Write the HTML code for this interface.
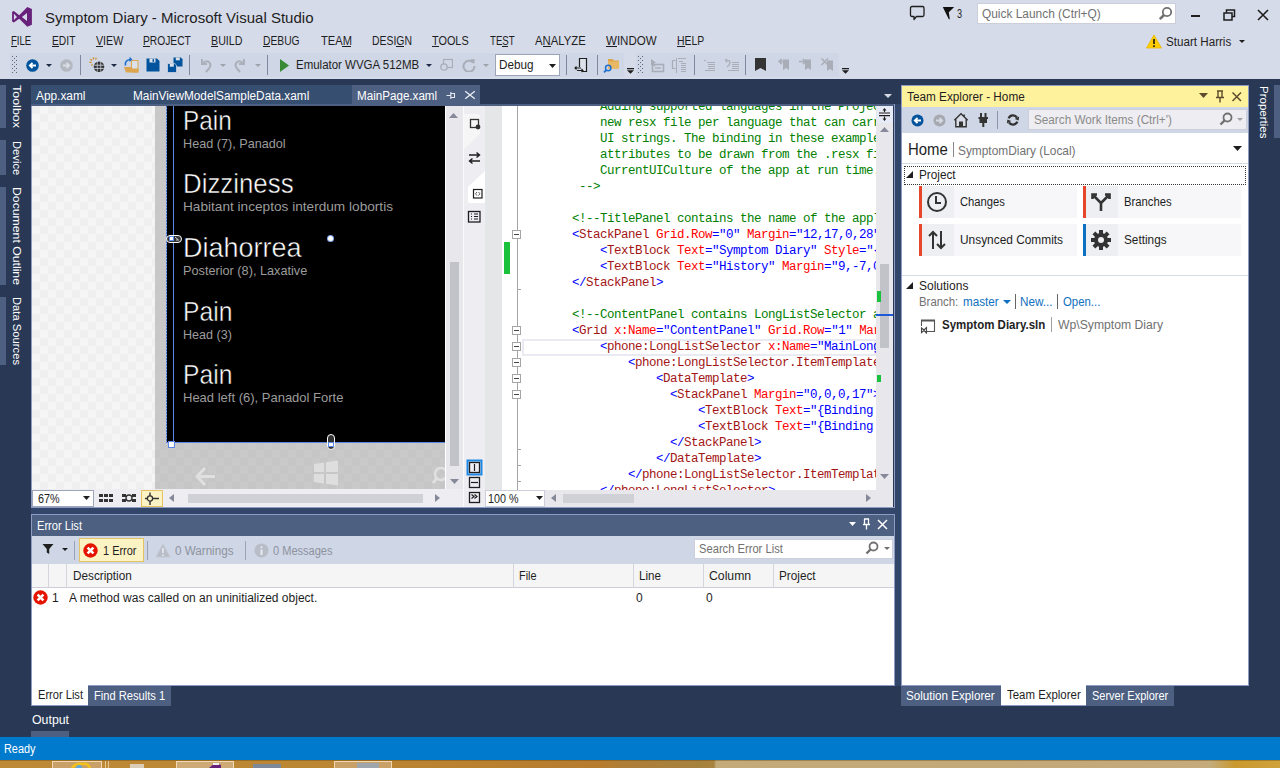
<!DOCTYPE html><html><head><meta charset="utf-8"><style>
html,body{margin:0;padding:0;}
body{width:1280px;height:768px;position:relative;overflow:hidden;background:#293955;font-family:"Liberation Sans", sans-serif;}
body div, body svg{position:absolute;}
.t{white-space:nowrap;}
</style></head><body>
<div style="left:0px;top:0px;width:1280px;height:79px;background:#D6DBE9;"></div>
<div style="left:10px;top:53px;width:614px;height:24px;background:#CFD6E5;"></div>
<div style="left:636px;top:53px;width:203px;height:24px;background:#CFD6E5;"></div>
<div style="left:0px;top:79px;width:1280px;height:658px;background:#293955;"></div>
<div style="left:0px;top:737px;width:1280px;height:23px;background:#007ACC;"></div>
<div style="left:0;top:760px;width:1280px;height:8px;background:linear-gradient(90deg,#BE8A38 0px,#BC8733 300px,#B77C2E 600px,#AE7E38 625px,#A6823F 700px,#A8843F 714px,#C3AA79 716px,#C2A978 1000px,#C3AB7C 1210px,#C9992F 1235px,#D0A23A 1280px);"></div>
<div style="left:0px;top:760px;width:1280px;height:1px;background:rgba(90,60,10,0.35);"></div>
<div style="left:52px;top:761px;width:50px;height:7px;background:#C9A168;box-sizing:border-box;border:1px solid rgba(255,240,210,0.7);border-bottom:none;"></div>
<div style="left:176px;top:761px;width:58px;height:7px;background:#CDAA76;box-sizing:border-box;border:1px solid rgba(255,240,210,0.7);border-bottom:none;"></div>
<div style="left:334px;top:761px;width:58px;height:7px;background:#C9A168;box-sizing:border-box;border:1px solid rgba(255,240,210,0.7);border-bottom:none;"></div>
<div style="left:105px;top:761px;width:1px;height:7px;background:rgba(255,240,210,0.6);"></div>
<div style="left:108px;top:761px;width:1px;height:7px;background:rgba(255,240,210,0.6);"></div>
<svg style="left:70px;top:762px;" width="22" height="6" viewBox="0 0 22 6"><path d="M2 6Q6 1 12 2Q18 1 20 6" stroke="#F3C11B" stroke-width="2.5" fill="none"/><circle cx="9" cy="6" r="3" fill="#5FA8D8"/></svg>
<svg style="left:205px;top:762px;" width="18" height="6" viewBox="0 0 18 6"><path d="M4 6L10 1L16 3V6Z" fill="#68217A"/><rect x="8" y="1" width="6" height="2" fill="#F0F0F0"/></svg>
<div style="left:130px;top:764px;width:14px;height:4px;background:#D9CDB8;"></div>
<div style="left:253px;top:764px;width:28px;height:4px;background:#7D8898;"></div>
<div style="left:357px;top:763px;width:22px;height:5px;background:#9EA5AC;"></div>
<svg style="left:0px;top:0px;" width="40" height="32" viewBox="0 0 40 32"><path d="M13.8 11.1L19.2 15.2L27.3 7L31.9 9.1V24.7L27.3 26.7L19.2 18.8L13.8 22.6L12.1 21.6V11.8Z M21.9 17L27 13V21.1Z M13.9 13.8L17 17L13.9 19.9Z" fill="#68217A" fill-rule="evenodd"/></svg>
<div class="t" style="left:44.5px;top:10.30px;font-size:15px;line-height:15px;color:#1E1E1E;transform-origin:0 0;transform:scaleX(1.0014);">Symptom Diary - Microsoft Visual Studio</div>
<svg style="left:909px;top:5px;" width="17" height="16" viewBox="0 0 17 16"><path d="M3 1.5H13.5Q15 1.5 15 3V10Q15 11.5 13.5 11.5H7.5L5 14.5V11.5H3Q1.5 11.5 1.5 10V3Q1.5 1.5 3 1.5Z" stroke="#1E1E1E" stroke-width="1.3" fill="none" stroke-linejoin="round"/></svg>
<svg style="left:942px;top:6px;" width="13" height="14" viewBox="0 0 13 14"><path d="M0.8 1H12.2L6.8 6.2L7.8 13.2H6.8Z" fill="#111"/></svg>
<div class="t" style="left:957.4px;top:7.84px;font-size:12px;line-height:12px;color:#1E1E1E;transform-origin:0 0;transform:scaleX(0.7626);">3</div>
<div style="left:977px;top:3px;width:199px;height:21px;background:#FFFFFF;box-sizing:border-box;border:1px solid #CCCEDB;"></div>
<div class="t" style="left:981.7px;top:7.84px;font-size:12px;line-height:12px;color:#717171;transform-origin:0 0;transform:scaleX(0.9917);">Quick Launch (Ctrl+Q)</div>
<svg style="left:1158px;top:6px;" width="15" height="15" viewBox="0 0 15 15"><circle cx="9" cy="6" r="4.2" stroke="#717171" stroke-width="1.8" fill="none"/><path d="M6 9L1.8 13.2" stroke="#717171" stroke-width="2.6"/></svg>
<div style="left:1191px;top:15px;width:9px;height:2px;background:#1E1E1E;"></div>
<svg style="left:1223px;top:9px;" width="13" height="12" viewBox="0 0 13 12"><path d="M3.5 3.5V1H11.5V7.5H9M1 4H9V11H1Z" stroke="#1E1E1E" stroke-width="1.5" fill="none"/></svg>
<svg style="left:1257px;top:9px;" width="12" height="12" viewBox="0 0 12 12"><path d="M1 1L11 11M11 1L1 11" stroke="#1E1E1E" stroke-width="1.6"/></svg>
<div class="t" style="left:11.25px;top:34.84px;font-size:12px;line-height:12px;color:#1E1E1E;transform-origin:0 0;transform:scaleX(0.8000);">FILE</div>
<div style="left:11px;top:46px;width:6px;height:1px;background:#1E1E1E;"></div>
<div class="t" style="left:52.0px;top:34.84px;font-size:12px;line-height:12px;color:#1E1E1E;transform-origin:0 0;transform:scaleX(0.8568);">EDIT</div>
<div style="left:52px;top:46px;width:7px;height:1px;background:#1E1E1E;"></div>
<div class="t" style="left:95.6px;top:34.84px;font-size:12px;line-height:12px;color:#1E1E1E;transform-origin:0 0;transform:scaleX(0.8896);">VIEW</div>
<div style="left:96px;top:46px;width:7px;height:1px;background:#1E1E1E;"></div>
<div class="t" style="left:142.9px;top:34.84px;font-size:12px;line-height:12px;color:#1E1E1E;transform-origin:0 0;transform:scaleX(0.8536);">PROJECT</div>
<div style="left:143px;top:46px;width:7px;height:1px;background:#1E1E1E;"></div>
<div class="t" style="left:210.9px;top:34.84px;font-size:12px;line-height:12px;color:#1E1E1E;transform-origin:0 0;transform:scaleX(0.8905);">BUILD</div>
<div style="left:211px;top:46px;width:7px;height:1px;background:#1E1E1E;"></div>
<div class="t" style="left:262.9px;top:34.84px;font-size:12px;line-height:12px;color:#1E1E1E;transform-origin:0 0;transform:scaleX(0.8574);">DEBUG</div>
<div style="left:263px;top:46px;width:7px;height:1px;background:#1E1E1E;"></div>
<div class="t" style="left:320.6px;top:34.84px;font-size:12px;line-height:12px;color:#1E1E1E;transform-origin:0 0;transform:scaleX(0.9276);">TEAM</div>
<div style="left:342px;top:46px;width:9px;height:1px;background:#1E1E1E;"></div>
<div class="t" style="left:371.9px;top:34.84px;font-size:12px;line-height:12px;color:#1E1E1E;transform-origin:0 0;transform:scaleX(0.8696);">DESIGN</div>
<div style="left:396px;top:46px;width:8px;height:1px;background:#1E1E1E;"></div>
<div class="t" style="left:432.1px;top:34.84px;font-size:12px;line-height:12px;color:#1E1E1E;transform-origin:0 0;transform:scaleX(0.9051);">TOOLS</div>
<div style="left:432px;top:46px;width:7px;height:1px;background:#1E1E1E;"></div>
<div class="t" style="left:489.8px;top:34.84px;font-size:12px;line-height:12px;color:#1E1E1E;transform-origin:0 0;transform:scaleX(0.8049);">TEST</div>
<div style="left:502px;top:46px;width:6px;height:1px;background:#1E1E1E;"></div>
<div class="t" style="left:535.0px;top:34.84px;font-size:12px;line-height:12px;color:#1E1E1E;transform-origin:0 0;transform:scaleX(0.9422);">ANALYZE</div>
<div style="left:543px;top:46px;width:8px;height:1px;background:#1E1E1E;"></div>
<div class="t" style="left:605.9px;top:34.84px;font-size:12px;line-height:12px;color:#1E1E1E;transform-origin:0 0;transform:scaleX(0.9615);">WINDOW</div>
<div style="left:606px;top:46px;width:11px;height:1px;background:#1E1E1E;"></div>
<div class="t" style="left:677.0px;top:34.84px;font-size:12px;line-height:12px;color:#1E1E1E;transform-origin:0 0;transform:scaleX(0.8701);">HELP</div>
<div style="left:677px;top:46px;width:8px;height:1px;background:#1E1E1E;"></div>
<svg style="left:1146px;top:34px;" width="16" height="15" viewBox="0 0 16 15"><path d="M8 1L15.5 14H0.5Z" fill="#FFCC00" stroke="#E8B800" stroke-width="0.8" stroke-linejoin="round"/><path d="M8 5V10M8 11.2V13" stroke="#1E1E1E" stroke-width="1.7"/></svg>
<div class="t" style="left:1165.7px;top:35.84px;font-size:12px;line-height:12px;color:#1E1E1E;transform-origin:0 0;transform:scaleX(0.9692);">Stuart Harris</div>
<svg style="left:1239px;top:40px;" width="7" height="4" viewBox="0 0 7 4"><path d="M0 0H6L3 3Z" fill="#1E1E1E"/></svg>
<svg style="left:12px;top:56px;" width="5" height="17" viewBox="0 0 5 17"><g fill="#5F6675"><rect x="0" y="0" width="1" height="1"/><rect x="4" y="0" width="1" height="1"/><rect x="0" y="4" width="1" height="1"/><rect x="4" y="4" width="1" height="1"/><rect x="0" y="8" width="1" height="1"/><rect x="4" y="8" width="1" height="1"/><rect x="0" y="12" width="1" height="1"/><rect x="4" y="12" width="1" height="1"/><rect x="0" y="16" width="1" height="1"/><rect x="4" y="16" width="1" height="1"/><rect x="2" y="2" width="1" height="1"/><rect x="2" y="6" width="1" height="1"/><rect x="2" y="10" width="1" height="1"/><rect x="2" y="14" width="1" height="1"/></g></svg>
<svg style="left:638px;top:56px;" width="5" height="17" viewBox="0 0 5 17"><g fill="#5F6675"><rect x="0" y="0" width="1" height="1"/><rect x="4" y="0" width="1" height="1"/><rect x="0" y="4" width="1" height="1"/><rect x="4" y="4" width="1" height="1"/><rect x="0" y="8" width="1" height="1"/><rect x="4" y="8" width="1" height="1"/><rect x="0" y="12" width="1" height="1"/><rect x="4" y="12" width="1" height="1"/><rect x="0" y="16" width="1" height="1"/><rect x="4" y="16" width="1" height="1"/><rect x="2" y="2" width="1" height="1"/><rect x="2" y="6" width="1" height="1"/><rect x="2" y="10" width="1" height="1"/><rect x="2" y="14" width="1" height="1"/></g></svg>
<svg style="left:26px;top:59px;" width="13" height="13" viewBox="0 0 13 13"><circle cx="6.5" cy="6.5" r="6.3" fill="#00539C"/><path d="M10 6.5H4M6.5 3.8L3.8 6.5L6.5 9.2" stroke="#FFFFFF" stroke-width="1.8" fill="none"/></svg>
<svg style="left:46px;top:64px;" width="7" height="4" viewBox="0 0 7 4"><path d="M0 0H6L3 3Z" fill="#1E2A45"/></svg>
<svg style="left:60px;top:59px;" width="13" height="13" viewBox="0 0 13 13"><circle cx="6.5" cy="6.5" r="6.3" fill="#B4B8C1"/><path d="M3 6.5H9M6.5 3.8L9.2 6.5L6.5 9.2" stroke="#D9DDE6" stroke-width="1.8" fill="none"/></svg>
<div style="left:80px;top:55px;width:1px;height:20px;background:#7F889C;"></div>
<svg style="left:88px;top:56px;" width="18" height="18" viewBox="0 0 18 18"><circle cx="11" cy="10.8" r="5.3" fill="#333"/><path d="M6.2 9.2H15.8M6.2 12.4H15.8" stroke="#CFD6E5" stroke-width="0.9"/><path d="M9.3 5.8V15.8M12.7 5.8V15.8" stroke="#CFD6E5" stroke-width="0.7"/><path d="M1.5 6.3H3.6M2.4 3.3L4 4.5M5.3 1.4L5.6 3.3M8.3 1.8L7.6 3.6M3.2 9.6L4.6 8.6" stroke="#D08A1E" stroke-width="1.2"/></svg>
<svg style="left:111px;top:64px;" width="7" height="4" viewBox="0 0 7 4"><path d="M0 0H6L3 3Z" fill="#1E2A45"/></svg>
<svg style="left:123px;top:56px;" width="16" height="18" viewBox="0 0 16 18"><path d="M8.5 4.5H15V16H8.5Z" fill="#DDE1EA" stroke="#DCA54E" stroke-width="1"/><path d="M1 11H8L9.5 12.5H15.5V16.5H3Z" fill="#DCA54E"/><path d="M2.5 9.5Q1.5 4 7.5 3.5" stroke="#1E6FD0" stroke-width="1.6" fill="none"/><path d="M6.5 0.8L9.5 3.5L6.5 6Z" fill="#1E6FD0"/></svg>
<svg style="left:146px;top:58px;" width="14" height="14" viewBox="0 0 14 14"><path d="M0.5 0.5H11L13.5 3V13.5H0.5Z" fill="#00539C"/><rect x="3.5" y="0.5" width="6" height="4" fill="#DDE1EA"/><rect x="6.5" y="1.2" width="1.6" height="2.6" fill="#00539C"/></svg>
<svg style="left:167px;top:57px;" width="16" height="16" viewBox="0 0 16 16"><path d="M6.5 0.5H13.8L15.5 2.2V9.5H6.5Z" fill="#00539C"/><rect x="8.8" y="0.5" width="4" height="2.8" fill="#DDE1EA"/><path d="M0.5 6.5H7.8L9.5 8.2V15.5H0.5Z" fill="#00539C" stroke="#CFD6E5" stroke-width="0.8"/><rect x="2.8" y="6.9" width="4" height="2.8" fill="#DDE1EA"/></svg>
<div style="left:189px;top:55px;width:1px;height:20px;background:#7F889C;"></div>
<svg style="left:198px;top:57px;" width="15" height="16" viewBox="0 0 15 16"><path d="M4 2V7H9M4.5 6.5Q8 3 11 5Q14 8 11 11.5L8 15" stroke="#ABB0BA" stroke-width="2" fill="none"/></svg>
<svg style="left:220px;top:64px;" width="7" height="4" viewBox="0 0 7 4"><path d="M0 0H6L3 3Z" fill="#9EA3AD"/></svg>
<svg style="left:233px;top:57px;" width="15" height="16" viewBox="0 0 15 16"><path d="M11 2V7H6M10.5 6.5Q7 3 4 5Q1 8 4 11.5L7 15" stroke="#ABB0BA" stroke-width="2" fill="none"/></svg>
<svg style="left:255px;top:64px;" width="7" height="4" viewBox="0 0 7 4"><path d="M0 0H6L3 3Z" fill="#9EA3AD"/></svg>
<div style="left:267px;top:55px;width:1px;height:20px;background:#7F889C;"></div>
<svg style="left:280px;top:59px;" width="9" height="13" viewBox="0 0 9 13"><path d="M0 0L9 6.5L0 13Z" fill="#388A34"/></svg>
<div class="t" style="left:296.2px;top:58.84px;font-size:12px;line-height:12px;color:#1E1E1E;transform-origin:0 0;transform:scaleX(0.9566);">Emulator WVGA 512MB</div>
<svg style="left:426px;top:64px;" width="7" height="4" viewBox="0 0 7 4"><path d="M0 0H6L3 3Z" fill="#1E2A45"/></svg>
<svg style="left:440px;top:58px;" width="13" height="13" viewBox="0 0 13 13"><rect x="3.5" y="1.5" width="9" height="8" stroke="#A8ADB7" stroke-width="1.2" fill="none"/><circle cx="4" cy="9" r="3.2" stroke="#A8ADB7" stroke-width="1.3" fill="#CFD6E5"/></svg>
<svg style="left:462px;top:58px;" width="14" height="14" viewBox="0 0 14 14"><path d="M11 4.5A5.5 5.5 0 1 0 12.5 8" stroke="#A8ADB7" stroke-width="2" fill="none"/><path d="M8.5 1L13 1.5L12 6Z" fill="#A8ADB7"/></svg>
<svg style="left:483px;top:64px;" width="7" height="4" viewBox="0 0 7 4"><path d="M0 0H6L3 3Z" fill="#9EA3AD"/></svg>
<div style="left:495px;top:54px;width:65px;height:22px;background:#FFFFFF;box-sizing:border-box;border:1px solid #9DA5B8;"></div>
<div class="t" style="left:499.2px;top:58.84px;font-size:12px;line-height:12px;color:#1E1E1E;transform-origin:0 0;transform:scaleX(0.9753);">Debug</div>
<svg style="left:549px;top:64px;" width="8" height="5" viewBox="0 0 8 5"><path d="M0 0H7L3.5 4Z" fill="#1E1E1E"/></svg>
<div style="left:566px;top:55px;width:1px;height:20px;background:#7F889C;"></div>
<svg style="left:573px;top:57px;" width="16" height="16" viewBox="0 0 16 16"><path d="M6.5 10V1.5H13.5V14.5H9" stroke="#1E1E1E" stroke-width="1.2" fill="#DDE1EA"/><path d="M2 11H8M3.5 9.5L2 11L3.5 12.5M4 13.5H10M8.5 12L10 13.5L8.5 15" stroke="#1E1E1E" stroke-width="1.1" fill="none"/></svg>
<div style="left:597px;top:55px;width:1px;height:20px;background:#7F889C;"></div>
<svg style="left:603px;top:57px;" width="17" height="17" viewBox="0 0 17 17"><path d="M5 2H9.5L11 3.5H16V11.5H5Z" fill="#DCA54E"/><path d="M5 4.5H16V11.5H5Z" fill="#E8B865"/><circle cx="5.2" cy="11" r="2.7" stroke="#1E6FD0" stroke-width="1.5" fill="none"/><path d="M3.3 13L1 15.3" stroke="#1E6FD0" stroke-width="1.8"/></svg>
<div style="left:624px;top:53px;width:12px;height:24px;background:#D6DBE9;"></div>
<svg style="left:627px;top:68px;" width="7" height="6" viewBox="0 0 7 6"><rect x="0" y="0" width="7" height="1.3" fill="#1E1E1E"/><path d="M0 2.3H7L3.5 5.8Z" fill="#1E1E1E"/></svg>
<svg style="left:650px;top:58px;" width="16" height="15" viewBox="0 0 16 15"><path d="M1 1L6 4.5L3.8 5.2L5.3 8L4 8.6L2.6 5.9L1 7.4Z" fill="#A8ADB7"/><rect x="2.5" y="6.5" width="11" height="7" stroke="#A8ADB7" stroke-width="1.6" fill="none"/><rect x="5" y="9.3" width="6" height="1.4" fill="#A8ADB7"/></svg>
<svg style="left:671px;top:57px;" width="16" height="16" viewBox="0 0 16 16"><path d="M4.5 3.5H1.5V11.5H4.5" stroke="#A8ADB7" stroke-width="1.2" fill="none"/><rect x="5" y="1" width="1" height="15" fill="#A8ADB7"/><rect x="7" y="1" width="8" height="1" fill="#A8ADB7"/><rect x="8" y="4" width="4" height="1" fill="#A8ADB7"/><rect x="10" y="6" width="5" height="1" fill="#A8ADB7"/><rect x="10" y="8" width="5" height="1" fill="#A8ADB7"/><rect x="10" y="10" width="5" height="1" fill="#A8ADB7"/><rect x="10" y="12" width="5" height="1" fill="#A8ADB7"/><rect x="10" y="14" width="5" height="1" fill="#A8ADB7"/></svg>
<div style="left:694px;top:55px;width:1px;height:20px;background:#7F889C;"></div>
<svg style="left:703px;top:58px;" width="14" height="14" viewBox="0 0 14 14"><rect x="1" y="2" width="2" height="1" fill="#A8ADB7"/><rect x="4" y="4" width="8" height="1" fill="#A8ADB7"/><rect x="5" y="6" width="7" height="1" fill="#A8ADB7"/><rect x="5" y="8" width="7" height="1" fill="#A8ADB7"/><rect x="5" y="10" width="7" height="1" fill="#A8ADB7"/><rect x="2" y="12" width="10" height="1" fill="#A8ADB7"/></svg>
<svg style="left:724px;top:58px;" width="16" height="15" viewBox="0 0 16 15"><path d="M2 4Q6 1 6 4.5Q6 7 3 9" stroke="#A8ADB7" stroke-width="1.4" fill="none"/><path d="M0.5 1.5L3.5 1L2.5 4.5Z" fill="#A8ADB7"/><rect x="8" y="4" width="7" height="1" fill="#A8ADB7"/><rect x="8" y="6" width="7" height="1" fill="#A8ADB7"/><rect x="8" y="8" width="7" height="1" fill="#A8ADB7"/><rect x="8" y="10" width="7" height="1" fill="#A8ADB7"/><rect x="4" y="12" width="11" height="1" fill="#A8ADB7"/></svg>
<div style="left:745px;top:55px;width:1px;height:20px;background:#7F889C;"></div>
<svg style="left:755px;top:58px;" width="11" height="13" viewBox="0 0 11 13"><path d="M0 0H11V13L5.5 10L0 13Z" fill="#333"/></svg>
<svg style="left:777px;top:57px;" width="13" height="15" viewBox="0 0 13 15"><path d="M6 2.5H12V13L9 11L6 13Z" fill="#A8ADB7"/><path d="M8 4.5H2.5M4.8 2L2.2 4.5L4.8 7" stroke="#A8ADB7" stroke-width="1.6" fill="none"/></svg>
<svg style="left:798px;top:57px;" width="13" height="15" viewBox="0 0 13 15"><path d="M7 2.5H13V13L10 11L7 13Z" fill="#A8ADB7"/><path d="M1 4.5H7M5 2L7.6 4.5L5 7" stroke="#A8ADB7" stroke-width="1.6" fill="none"/></svg>
<svg style="left:820px;top:57px;" width="13" height="15" viewBox="0 0 13 15"><path d="M7 3.5H13V14L10 12L7 14Z" fill="#A8ADB7"/><path d="M1.5 1.5L8 8M8 1.5L1.5 8" stroke="#A8ADB7" stroke-width="1.5" fill="none"/></svg>
<div style="left:839px;top:53px;width:12px;height:24px;background:#D6DBE9;"></div>
<svg style="left:842px;top:68px;" width="7" height="6" viewBox="0 0 7 6"><rect x="0" y="0" width="7" height="1.3" fill="#1E1E1E"/><path d="M0 2.3H7L3.5 5.8Z" fill="#1E1E1E"/></svg>
<div style="left:0px;top:85px;width:6px;height:43px;background:#4D6082;"></div>
<div class="t" style="left:22px;top:85.00px;font-size:11.5px;line-height:11.5px;color:#FFFFFF;transform-origin:0 0;transform:rotate(90deg) scaleX(1.0852);">Toolbox</div>
<div style="left:0px;top:140px;width:6px;height:35px;background:#4D6082;"></div>
<div class="t" style="left:22px;top:140.80px;font-size:11.5px;line-height:11.5px;color:#FFFFFF;transform-origin:0 0;transform:rotate(90deg) scaleX(0.9737);">Device</div>
<div style="left:0px;top:187px;width:6px;height:98px;background:#4D6082;"></div>
<div class="t" style="left:22px;top:187.00px;font-size:11.5px;line-height:11.5px;color:#FFFFFF;transform-origin:0 0;transform:rotate(90deg) scaleX(1.0645);">Document Outline</div>
<div style="left:0px;top:297px;width:6px;height:68px;background:#4D6082;"></div>
<div class="t" style="left:22px;top:297.00px;font-size:11.5px;line-height:11.5px;color:#FFFFFF;transform-origin:0 0;transform:rotate(90deg) scaleX(0.9758);">Data Sources</div>
<div style="left:1274px;top:85px;width:6px;height:53px;background:#4D6082;"></div>
<div class="t" style="left:1268.5px;top:85.50px;font-size:11.5px;line-height:11.5px;color:#FFFFFF;transform-origin:0 0;transform:rotate(90deg) scaleX(1.0012);">Properties</div>
<div style="left:31px;top:85px;width:321px;height:19px;background:#364E6F;"></div>
<div style="left:352px;top:85px;width:128px;height:19px;background:#4D6082;"></div>
<div style="left:31px;top:104px;width:864px;height:2px;background:#4D6082;"></div>
<div class="t" style="left:35.6px;top:89.84px;font-size:12px;line-height:12px;color:#FFFFFF;transform-origin:0 0;transform:scaleX(0.9880);">App.xaml</div>
<div class="t" style="left:132.5px;top:89.84px;font-size:12px;line-height:12px;color:#FFFFFF;transform-origin:0 0;transform:scaleX(0.9836);">MainViewModelSampleData.xaml</div>
<div class="t" style="left:356.6px;top:89.84px;font-size:12px;line-height:12px;color:#FFFFFF;transform-origin:0 0;transform:scaleX(0.9687);">MainPage.xaml</div>
<svg style="left:446px;top:90px;" width="10" height="10" viewBox="0 0 10 10"><path d="M0.5 5.5H4.5M4.8 2V9M4.8 3.5H8.5V7.5H4.8" stroke="#E6E9F0" stroke-width="1.1" fill="none"/></svg>
<svg style="left:464px;top:90px;" width="12" height="10" viewBox="0 0 12 10"><path d="M1.2 1.2L10.8 8.8M10.8 1.2L1.2 8.8" stroke="#E6E9F0" stroke-width="1.4"/></svg>
<svg style="left:884px;top:94px;" width="9" height="5" viewBox="0 0 9 5"><path d="M0 0H8L4 4Z" fill="#D5DAE5"/></svg>
<div style="left:32px;top:106px;width:123px;height:384px;background:repeating-conic-gradient(#F5F5F5 0 25%,#EFEFEF 0 50%) 0 0/16px 16px;"></div>
<div style="left:155px;top:106px;width:290px;height:383px;background:repeating-conic-gradient(#C9C9C9 0 25%,#C6C6C6 0 50%) 5px 0/16px 16px;"></div>
<div style="left:155px;top:106px;width:11px;height:336px;background:#C8C8C8;"></div>
<div style="left:166px;top:106px;width:279px;height:336px;background:#000000;"></div>
<div style="left:166px;top:106px;width:1px;height:336px;background:repeating-linear-gradient(180deg,#4F7FE0 0 2px,#9DB4E8 2px 3px);"></div>
<div style="left:173px;top:106px;width:1px;height:336px;background:#5A86E6;"></div>
<div style="left:166px;top:442px;width:279px;height:1px;background:#5A86E6;"></div>
<div style="left:169px;top:442px;width:5px;height:5px;background:#FFFFFF;box-shadow:0 0 0 1px #5A86E6;"></div>
<div style="left:166px;top:235px;width:14px;height:6px;border:1px solid #FFFFFF;border-radius:4px;background:#333;"></div>
<div style="left:169px;top:236px;width:5px;height:5px;background:#FFFFFF;box-sizing:border-box;border:1px solid #5A8BE8;"></div>
<svg style="left:174px;top:236px;" width="6" height="5" viewBox="0 0 6 5"><path d="M1 1L4 3.5M2 4H5" stroke="#DDD" stroke-width="0.9"/></svg>
<div style="left:327px;top:434px;width:6px;height:14px;border:1px solid #FFFFFF;border-radius:4px;background:#333;"></div>
<div style="left:328px;top:442px;width:6px;height:5px;background:#FFFFFF;box-sizing:border-box;border:1px solid #5A8BE8;"></div>
<div style="left:328px;top:236px;width:5px;height:5px;border-radius:50%;background:#FFFFFF;box-shadow:0 0 0 1px #7FA6F0;"></div>
<div class="t" style="left:183.3px;top:106.70px;font-size:28px;line-height:28px;color:#FFFFFF;transform-origin:0 0;transform:scaleX(0.8687);-webkit-text-stroke:0.5px #000;">Pain</div>
<div class="t" style="left:182.6px;top:136.77px;font-size:13.5px;line-height:13.5px;color:#9C9C9C;transform-origin:0 0;transform:scaleX(0.9365);">Head (7), Panadol</div>
<div class="t" style="left:183.3px;top:170.10px;font-size:28px;line-height:28px;color:#FFFFFF;transform-origin:0 0;transform:scaleX(0.9231);-webkit-text-stroke:0.5px #000;">Dizziness</div>
<div class="t" style="left:182.6px;top:200.17px;font-size:13.5px;line-height:13.5px;color:#9C9C9C;transform-origin:0 0;transform:scaleX(1.0102);">Habitant inceptos interdum lobortis</div>
<div class="t" style="left:183.3px;top:233.80px;font-size:28px;line-height:28px;color:#FFFFFF;transform-origin:0 0;transform:scaleX(0.9634);-webkit-text-stroke:0.5px #000;">Diahorrea</div>
<div class="t" style="left:182.6px;top:263.92px;font-size:13.5px;line-height:13.5px;color:#9C9C9C;transform-origin:0 0;transform:scaleX(0.9412);">Posterior (8), Laxative</div>
<div class="t" style="left:183.3px;top:297.90px;font-size:28px;line-height:28px;color:#FFFFFF;transform-origin:0 0;transform:scaleX(0.8812);-webkit-text-stroke:0.5px #000;">Pain</div>
<div class="t" style="left:182.6px;top:327.67px;font-size:13.5px;line-height:13.5px;color:#9C9C9C;transform-origin:0 0;transform:scaleX(0.9295);">Head (3)</div>
<div class="t" style="left:183.3px;top:360.70px;font-size:28px;line-height:28px;color:#FFFFFF;transform-origin:0 0;transform:scaleX(0.8812);-webkit-text-stroke:0.5px #000;">Pain</div>
<div class="t" style="left:182.6px;top:390.67px;font-size:13.5px;line-height:13.5px;color:#9C9C9C;transform-origin:0 0;transform:scaleX(0.9630);">Head left (6), Panadol Forte</div>
<svg style="left:195px;top:467px;" width="21" height="19" viewBox="0 0 21 19"><path d="M10 1L2 9.5L10 18M2 9.5H20" stroke="#E0E0E0" stroke-width="3" fill="none"/></svg>
<svg style="left:313px;top:460px;" width="26" height="26" viewBox="0 0 26 26"><path d="M1 4L11 2.5V12H1ZM13 2.2L25 0.5V12H13ZM1 14H11V23.5L1 22ZM13 14H25V25.5L13 23.8Z" fill="#DEDEDE"/></svg>
<svg style="left:432px;top:466px;" width="13" height="20" viewBox="0 0 13 20"><circle cx="9" cy="8" r="6" stroke="#E0E0E0" stroke-width="2.5" fill="none"/><path d="M5 12L1 17" stroke="#E0E0E0" stroke-width="3"/></svg>
<div style="left:445px;top:106px;width:1px;height:383px;background:#FFFFFF;"></div>
<div style="left:446px;top:106px;width:17px;height:383px;background:#E8E8EC;"></div>
<svg style="left:449px;top:113px;" width="10" height="6" viewBox="0 0 10 6"><path d="M0 5H9L4.5 0Z" fill="#868999"/></svg>
<div style="left:450px;top:262px;width:9px;height:204px;background:#C2C3C9;"></div>
<svg style="left:450px;top:479px;" width="10" height="6" viewBox="0 0 10 6"><path d="M0 0H9L4.5 5Z" fill="#868999"/></svg>
<div style="left:463px;top:106px;width:1px;height:401px;background:#FAFAFA;"></div>
<div style="left:464px;top:106px;width:21px;height:401px;background:#EEEEF2;"></div>
<div style="left:485px;top:106px;width:17px;height:384px;background:#E5E6E8;"></div>
<svg style="left:463px;top:106px;" width="22" height="100" viewBox="0 0 22 100"><path d="M1 8H15Q17 8 17 10V28L1 43Z" fill="#F6F6F7"/><path d="M22 65V97H7Q5 97 5 95V81Z" fill="#FFFFFF"/></svg>
<svg style="left:466px;top:115px;" width="18" height="16" viewBox="0 0 18 16"><rect x="4.5" y="4.5" width="8" height="8" stroke="#333" stroke-width="1.3" fill="none"/><circle cx="12" cy="12" r="2.4" fill="#333"/></svg>
<svg style="left:466px;top:149px;" width="18" height="18" viewBox="0 0 18 18"><path d="M3 6H13.5M10.5 3.5L13.5 6L10.5 8.5M14 12H3.5M6.5 9.5L3.5 12L6.5 14.5" stroke="#1E1E1E" stroke-width="1.4" fill="none"/></svg>
<svg style="left:470px;top:187px;" width="14" height="13" viewBox="0 0 14 13"><rect x="3.5" y="2.5" width="8.5" height="8.5" stroke="#1E1E1E" stroke-width="1.2" fill="none"/><path d="M7 5L5.6 6.8L7 8.6M8.5 5L9.9 6.8L8.5 8.6" stroke="#333" stroke-width="0.8" fill="none"/></svg>
<svg style="left:466px;top:209px;" width="16" height="15" viewBox="0 0 16 15"><rect x="2.5" y="2.5" width="11.5" height="10.5" stroke="#1E1E1E" stroke-width="1.3" fill="none"/><path d="M5 5H6M8 5H12M5 7.5H6M8 7.5H12M5 10H6M8 10H12" stroke="#1E1E1E" stroke-width="1"/></svg>
<svg style="left:466px;top:459px;" width="18" height="48" viewBox="0 0 18 48"><rect x="1.5" y="1.5" width="14" height="14" stroke="#1E88E5" stroke-width="2" fill="none"/><rect x="3.5" y="3.5" width="10" height="10" stroke="#1E1E1E" stroke-width="1.3" fill="none"/><path d="M8.5 5V12" stroke="#1E1E1E" stroke-width="1.2"/><rect x="3.5" y="18.5" width="10" height="10" stroke="#1E1E1E" stroke-width="1.3" fill="none"/><path d="M5 23.5H12" stroke="#1E1E1E" stroke-width="1.2"/><rect x="3.5" y="33.5" width="10" height="10" stroke="#1E1E1E" stroke-width="1.3" fill="none"/><path d="M5.5 35.5L8 37.5L5.5 39.5M8.5 35.5L11 37.5L8.5 39.5" stroke="#1E1E1E" stroke-width="1.2" fill="none"/></svg>
<div style="left:32px;top:489px;width:431px;height:18px;background:#EEEEF2;"></div>
<div style="left:32px;top:490px;width:62px;height:17px;background:#FFFFFF;box-sizing:border-box;border:1px solid #9DA5B8;"></div>
<div class="t" style="left:38.25px;top:492.84px;font-size:12px;line-height:12px;color:#1E1E1E;transform-origin:0 0;transform:scaleX(0.9000);">67%</div>
<svg style="left:83px;top:496px;" width="8" height="5" viewBox="0 0 8 5"><path d="M0 0H7L3.5 4Z" fill="#1E1E1E"/></svg>
<svg style="left:98px;top:491px;" width="16" height="14" viewBox="0 0 16 14"><path d="M1 3h4v3h-4zM6 3h4v3h-4zM11 3h4v3h-4zM1 8h4v3h-4zM6 8h4v3h-4zM11 8h4v3h-4z" fill="#333"/></svg>
<svg style="left:121px;top:491px;" width="16" height="14" viewBox="0 0 16 14"><path d="M1 3h4v3h-4zM11 3h4v3h-4zM1 8h4v3h-4zM11 8h4v3h-4z" fill="#333"/><circle cx="8" cy="7" r="3" stroke="#333" stroke-width="1.4" fill="none"/></svg>
<div style="left:141px;top:490px;width:22px;height:17px;background:#FCF3C5;box-sizing:border-box;border:1px solid #E5C365;"></div>
<svg style="left:144px;top:491px;" width="16" height="15" viewBox="0 0 16 15"><circle cx="6" cy="7.5" r="2.6" stroke="#333" stroke-width="1.3" fill="none"/><path d="M6 1.5V5M6 10V14M1 7.5H3.4M8.6 7.5H15" stroke="#333" stroke-width="1.4"/></svg>
<svg style="left:169px;top:494px;" width="6" height="9" viewBox="0 0 6 9"><path d="M5 0V8L0 4Z" fill="#868999"/></svg>
<div style="left:188px;top:494px;width:235px;height:9px;background:#D0D1D7;"></div>
<svg style="left:435px;top:494px;" width="6" height="9" viewBox="0 0 6 9"><path d="M0 0V8L5 4Z" fill="#868999"/></svg>
<div style="left:502px;top:106px;width:374px;height:384px;background:#FFFFFF;"></div>
<div style="left:517px;top:106px;width:1px;height:384px;background:#A5A5A5;"></div>
<div style="left:504px;top:242px;width:6px;height:32px;background:#1AC13C;"></div>
<div style="left:522px;top:339px;width:354px;height:17px;background:transparent;box-sizing:border-box;border:2px solid #EAEAF2;"></div>
<div style="left:502px;top:106px;width:374px;height:384px;overflow:hidden;">
<div class="t" style="left:98px;top:-4.98px;font-size:12.5px;line-height:12.5px;font-family:'Liberation Mono', monospace;letter-spacing:-0.5px;"><span style="color:#008000">Adding supported languages in the Project</span></div>
<div class="t" style="left:98px;top:11.02px;font-size:12.5px;line-height:12.5px;font-family:'Liberation Mono', monospace;letter-spacing:-0.5px;"><span style="color:#008000">new resx file per language that can carr</span></div>
<div class="t" style="left:98px;top:27.02px;font-size:12.5px;line-height:12.5px;font-family:'Liberation Mono', monospace;letter-spacing:-0.5px;"><span style="color:#008000">UI strings. The binding in these example</span></div>
<div class="t" style="left:98px;top:43.02px;font-size:12.5px;line-height:12.5px;font-family:'Liberation Mono', monospace;letter-spacing:-0.5px;"><span style="color:#008000">attributes to be drawn from the .resx fi</span></div>
<div class="t" style="left:98px;top:59.02px;font-size:12.5px;line-height:12.5px;font-family:'Liberation Mono', monospace;letter-spacing:-0.5px;"><span style="color:#008000">CurrentUICulture of the app at run time.</span></div>
<div class="t" style="left:77px;top:75.02px;font-size:12.5px;line-height:12.5px;font-family:'Liberation Mono', monospace;letter-spacing:-0.5px;"><span style="color:#008000">--&gt;</span></div>
<div class="t" style="left:70px;top:107.02px;font-size:12.5px;line-height:12.5px;font-family:'Liberation Mono', monospace;letter-spacing:-0.5px;"><span style="color:#008000">&lt;!--TitlePanel contains the name of the application</span></div>
<div class="t" style="left:70px;top:123.02px;font-size:12.5px;line-height:12.5px;font-family:'Liberation Mono', monospace;letter-spacing:-0.5px;"><span style="color:#0000FF">&lt;</span><span style="color:#A31515">StackPanel</span><span style="color:#FF0000"> Grid.Row</span><span style="color:#0000FF">=</span><span style="color:#0000FF">&quot;0&quot;</span><span style="color:#FF0000"> Margin</span><span style="color:#0000FF">=</span><span style="color:#0000FF">&quot;12,17,0,28&quot;</span></div>
<div class="t" style="left:98px;top:139.02px;font-size:12.5px;line-height:12.5px;font-family:'Liberation Mono', monospace;letter-spacing:-0.5px;"><span style="color:#0000FF">&lt;</span><span style="color:#A31515">TextBlock</span><span style="color:#FF0000"> Text</span><span style="color:#0000FF">=</span><span style="color:#0000FF">&quot;Symptom Diary&quot;</span><span style="color:#FF0000"> Style</span><span style="color:#0000FF">=</span><span style="color:#0000FF">&quot;{</span></div>
<div class="t" style="left:98px;top:155.02px;font-size:12.5px;line-height:12.5px;font-family:'Liberation Mono', monospace;letter-spacing:-0.5px;"><span style="color:#0000FF">&lt;</span><span style="color:#A31515">TextBlock</span><span style="color:#FF0000"> Text</span><span style="color:#0000FF">=</span><span style="color:#0000FF">&quot;History&quot;</span><span style="color:#FF0000"> Margin</span><span style="color:#0000FF">=</span><span style="color:#0000FF">&quot;9,-7,0,0&quot;</span></div>
<div class="t" style="left:70px;top:171.02px;font-size:12.5px;line-height:12.5px;font-family:'Liberation Mono', monospace;letter-spacing:-0.5px;"><span style="color:#0000FF">&lt;/</span><span style="color:#A31515">StackPanel</span><span style="color:#0000FF">&gt;</span></div>
<div class="t" style="left:70px;top:203.02px;font-size:12.5px;line-height:12.5px;font-family:'Liberation Mono', monospace;letter-spacing:-0.5px;"><span style="color:#008000">&lt;!--ContentPanel contains LongListSelector and</span></div>
<div class="t" style="left:70px;top:219.02px;font-size:12.5px;line-height:12.5px;font-family:'Liberation Mono', monospace;letter-spacing:-0.5px;"><span style="color:#0000FF">&lt;</span><span style="color:#A31515">Grid</span><span style="color:#FF0000"> x:Name</span><span style="color:#0000FF">=</span><span style="color:#0000FF">&quot;ContentPanel&quot;</span><span style="color:#FF0000"> Grid.Row</span><span style="color:#0000FF">=</span><span style="color:#0000FF">&quot;1&quot;</span><span style="color:#FF0000"> Margin</span></div>
<div class="t" style="left:98px;top:235.02px;font-size:12.5px;line-height:12.5px;font-family:'Liberation Mono', monospace;letter-spacing:-0.5px;"><span style="color:#0000FF">&lt;</span><span style="color:#A31515">phone:LongListSelector</span><span style="color:#FF0000"> x:Name</span><span style="color:#0000FF">=</span><span style="color:#0000FF">&quot;MainLongListSelector&quot;</span></div>
<div class="t" style="left:126px;top:251.02px;font-size:12.5px;line-height:12.5px;font-family:'Liberation Mono', monospace;letter-spacing:-0.5px;"><span style="color:#0000FF">&lt;</span><span style="color:#A31515">phone:LongListSelector.ItemTemplate</span><span style="color:#0000FF">&gt;</span></div>
<div class="t" style="left:154px;top:267.02px;font-size:12.5px;line-height:12.5px;font-family:'Liberation Mono', monospace;letter-spacing:-0.5px;"><span style="color:#0000FF">&lt;</span><span style="color:#A31515">DataTemplate</span><span style="color:#0000FF">&gt;</span></div>
<div class="t" style="left:168px;top:283.02px;font-size:12.5px;line-height:12.5px;font-family:'Liberation Mono', monospace;letter-spacing:-0.5px;"><span style="color:#0000FF">&lt;</span><span style="color:#A31515">StackPanel</span><span style="color:#FF0000"> Margin</span><span style="color:#0000FF">=</span><span style="color:#0000FF">&quot;0,0,0,17&quot;</span><span style="color:#0000FF">&gt;</span></div>
<div class="t" style="left:196px;top:299.02px;font-size:12.5px;line-height:12.5px;font-family:'Liberation Mono', monospace;letter-spacing:-0.5px;"><span style="color:#0000FF">&lt;</span><span style="color:#A31515">TextBlock</span><span style="color:#FF0000"> Text</span><span style="color:#0000FF">=</span><span style="color:#0000FF">&quot;{Binding LineOne}&quot;</span></div>
<div class="t" style="left:196px;top:315.02px;font-size:12.5px;line-height:12.5px;font-family:'Liberation Mono', monospace;letter-spacing:-0.5px;"><span style="color:#0000FF">&lt;</span><span style="color:#A31515">TextBlock</span><span style="color:#FF0000"> Text</span><span style="color:#0000FF">=</span><span style="color:#0000FF">&quot;{Binding LineTwo}&quot;</span></div>
<div class="t" style="left:168px;top:331.02px;font-size:12.5px;line-height:12.5px;font-family:'Liberation Mono', monospace;letter-spacing:-0.5px;"><span style="color:#0000FF">&lt;/</span><span style="color:#A31515">StackPanel</span><span style="color:#0000FF">&gt;</span></div>
<div class="t" style="left:154px;top:347.02px;font-size:12.5px;line-height:12.5px;font-family:'Liberation Mono', monospace;letter-spacing:-0.5px;"><span style="color:#0000FF">&lt;/</span><span style="color:#A31515">DataTemplate</span><span style="color:#0000FF">&gt;</span></div>
<div class="t" style="left:126px;top:363.02px;font-size:12.5px;line-height:12.5px;font-family:'Liberation Mono', monospace;letter-spacing:-0.5px;"><span style="color:#0000FF">&lt;/</span><span style="color:#A31515">phone:LongListSelector.ItemTemplate</span><span style="color:#0000FF">&gt;</span></div>
<div class="t" style="left:98px;top:379.02px;font-size:12.5px;line-height:12.5px;font-family:'Liberation Mono', monospace;letter-spacing:-0.5px;"><span style="color:#0000FF">&lt;/</span><span style="color:#A31515">phone:LongListSelector</span><span style="color:#0000FF">&gt;</span></div>
</div>
<div style="left:512px;top:230px;width:9px;height:9px;background:#FFFFFF;box-sizing:border-box;border:1px solid #A5A5A5;"></div>
<div style="left:514px;top:234px;width:5px;height:1px;background:#444444;"></div>
<div style="left:512px;top:326px;width:9px;height:9px;background:#FFFFFF;box-sizing:border-box;border:1px solid #A5A5A5;"></div>
<div style="left:514px;top:330px;width:5px;height:1px;background:#444444;"></div>
<div style="left:512px;top:342px;width:9px;height:9px;background:#FFFFFF;box-sizing:border-box;border:1px solid #A5A5A5;"></div>
<div style="left:514px;top:346px;width:5px;height:1px;background:#444444;"></div>
<div style="left:512px;top:358px;width:9px;height:9px;background:#FFFFFF;box-sizing:border-box;border:1px solid #A5A5A5;"></div>
<div style="left:514px;top:362px;width:5px;height:1px;background:#444444;"></div>
<div style="left:512px;top:374px;width:9px;height:9px;background:#FFFFFF;box-sizing:border-box;border:1px solid #A5A5A5;"></div>
<div style="left:514px;top:378px;width:5px;height:1px;background:#444444;"></div>
<div style="left:512px;top:390px;width:9px;height:9px;background:#FFFFFF;box-sizing:border-box;border:1px solid #A5A5A5;"></div>
<div style="left:514px;top:394px;width:5px;height:1px;background:#444444;"></div>
<div style="left:517px;top:289px;width:4px;height:1px;background:#A5A5A5;"></div>
<div style="left:517px;top:449px;width:4px;height:1px;background:#A5A5A5;"></div>
<div style="left:517px;top:465px;width:4px;height:1px;background:#A5A5A5;"></div>
<div style="left:517px;top:481px;width:4px;height:1px;background:#A5A5A5;"></div>
<div style="left:876px;top:106px;width:17px;height:384px;background:#E8E8EC;"></div>
<div style="left:877px;top:106px;width:16px;height:17px;background:#E6EBF7;"></div>
<svg style="left:877px;top:106px;" width="16" height="17" viewBox="0 0 16 17"><path d="M2 7H13M2 9.6H13" stroke="#1E1E1E" stroke-width="1.1"/><path d="M7.5 3V6M7.5 10.5V14" stroke="#1E1E1E" stroke-width="1.1"/><path d="M5.5 4.5L7.5 2L9.5 4.5Z M5.5 12.5L7.5 15L9.5 12.5Z" fill="#1E1E1E"/></svg>
<svg style="left:880px;top:127px;" width="10" height="6" viewBox="0 0 10 6"><path d="M0 5H9L4.5 0Z" fill="#868999"/></svg>
<div style="left:880px;top:264px;width:9px;height:84px;background:#C2C3C9;"></div>
<div style="left:877px;top:291px;width:4px;height:11px;background:#1AC13C;"></div>
<div style="left:877px;top:375px;width:4px;height:7px;background:#1AC13C;"></div>
<div style="left:876px;top:314px;width:17px;height:2px;background:#1E5BD8;"></div>
<svg style="left:880px;top:474px;" width="10" height="6" viewBox="0 0 10 6"><path d="M0 0H9L4.5 5Z" fill="#868999"/></svg>
<div style="left:893px;top:106px;width:2px;height:402px;background:#4D6082;"></div>
<div style="left:485px;top:490px;width:408px;height:17px;background:#E8E8EC;"></div>
<div style="left:485px;top:490px;width:60px;height:17px;background:#FFFFFF;box-sizing:border-box;border:1px solid #CCCEDB;"></div>
<div class="t" style="left:488.1px;top:492.84px;font-size:12px;line-height:12px;color:#1E1E1E;transform-origin:0 0;transform:scaleX(0.8941);">100 %</div>
<svg style="left:536px;top:496px;" width="8" height="5" viewBox="0 0 8 5"><path d="M0 0H7L3.5 4Z" fill="#1E1E1E"/></svg>
<svg style="left:551px;top:494px;" width="6" height="9" viewBox="0 0 6 9"><path d="M5 0V8L0 4Z" fill="#868999"/></svg>
<div style="left:563px;top:494px;width:71px;height:9px;background:#D0D1D7;"></div>
<svg style="left:866px;top:494px;" width="6" height="9" viewBox="0 0 6 9"><path d="M0 0V8L5 4Z" fill="#868999"/></svg>
<div style="left:901px;top:85px;width:348px;height:601px;background:#4D6082;"></div>
<div style="left:902px;top:86px;width:346px;height:21px;background:#FFF29D;"></div>
<div class="t" style="left:906.9px;top:90.84px;font-size:12px;line-height:12px;color:#1E1E1E;transform-origin:0 0;transform:scaleX(0.9812);">Team Explorer - Home</div>
<svg style="left:1199px;top:93px;" width="10" height="6" viewBox="0 0 10 6"><path d="M0 0H9L4.5 5Z" fill="#5C4C2C"/></svg>
<svg style="left:1214px;top:90px;" width="12" height="13" viewBox="0 0 12 13"><path d="M3 1H9M4 1V7M8 1V7M2 7.5H10M6 8V12.5" stroke="#5C4C2C" stroke-width="1.4" fill="none"/></svg>
<svg style="left:1231px;top:91px;" width="12" height="12" viewBox="0 0 12 12"><path d="M1.5 1.5L10 10M10 1.5L1.5 10" stroke="#5C4C2C" stroke-width="1.5"/></svg>
<div style="left:902px;top:107px;width:346px;height:26px;background:#CFD6E5;"></div>
<svg style="left:911px;top:114px;" width="13" height="13" viewBox="0 0 13 13"><circle cx="6.5" cy="6.5" r="6" fill="#00539C"/><path d="M10 6.5H4M6.5 3.8L3.8 6.5L6.5 9.2" stroke="#FFFFFF" stroke-width="1.8" fill="none"/></svg>
<svg style="left:933px;top:114px;" width="13" height="13" viewBox="0 0 13 13"><circle cx="6.5" cy="6.5" r="6" fill="#A6A9B0"/><path d="M3 6.5H9M6.5 3.8L9.2 6.5L6.5 9.2" stroke="#D5D9E2" stroke-width="1.8" fill="none"/></svg>
<svg style="left:953px;top:112px;" width="16" height="16" viewBox="0 0 16 16"><path d="M2 7.8L8 2L14 7.8V14.5H2Z" fill="#D9DDE8"/><path d="M1.3 8.3L8 1.8L14.7 8.3M2.8 7V14.8H13.2V7M11.2 2.5V5.3" stroke="#333" stroke-width="1.4" fill="none"/><rect x="6" y="9.5" width="4" height="5.3" fill="#333"/></svg>
<svg style="left:978px;top:112px;" width="10" height="16" viewBox="0 0 10 16"><rect x="2" y="1" width="2" height="5" fill="#333"/><rect x="6.5" y="1" width="2" height="5" fill="#333"/><rect x="0.5" y="5" width="9.5" height="2" fill="#333"/><rect x="1.5" y="6" width="7.5" height="5" fill="#333"/><rect x="4.3" y="10" width="2" height="5" fill="#333"/></svg>
<div style="left:997px;top:111px;width:1px;height:18px;background:#8A94AC;"></div>
<svg style="left:1006px;top:113px;" width="14" height="14" viewBox="0 0 14 14"><path d="M2.68 5.43A4.6 4.6 0 0 1 10.98 4.7M11.32 8.57A4.6 4.6 0 0 1 3.02 9.3" stroke="#333" stroke-width="2.3" fill="none"/><path d="M13.2 3.4L8.8 6L12.6 7.6Z M0.8 10.6L5.2 8L1.4 6.4Z" fill="#333"/></svg>
<div style="left:1028px;top:109px;width:219px;height:21px;background:#EEEEF2;box-sizing:border-box;border:1px solid #CCCEDB;"></div>
<div class="t" style="left:1033.8px;top:113.84px;font-size:12px;line-height:12px;color:#8A8A8A;transform-origin:0 0;transform:scaleX(0.9771);">Search Work Items (Ctrl+&#x27;)</div>
<svg style="left:1219px;top:112px;" width="14" height="15" viewBox="0 0 14 15"><circle cx="8.5" cy="5.5" r="4" stroke="#717171" stroke-width="1.8" fill="none"/><path d="M5.5 8.5L1.5 12.5" stroke="#717171" stroke-width="2.4"/></svg>
<svg style="left:1237px;top:118px;" width="7" height="4" viewBox="0 0 7 4"><path d="M0 0H6L3 3Z" fill="#A0A0A0"/></svg>
<div style="left:902px;top:133px;width:346px;height:553px;background:#FFFFFF;"></div>
<div class="t" style="left:907.75px;top:141.66px;font-size:16px;line-height:16px;color:#1E1E1E;transform-origin:0 0;transform:scaleX(0.9312);">Home</div>
<div style="left:953px;top:142px;width:1px;height:15px;background:#8A8A8A;"></div>
<div class="t" style="left:958.0px;top:144.00px;font-size:13px;line-height:13px;color:#717171;transform-origin:0 0;transform:scaleX(0.9140);">SymptomDiary (Local)</div>
<svg style="left:1233px;top:146px;" width="10" height="6" viewBox="0 0 10 6"><path d="M0 0H9L4.5 5Z" fill="#1E1E1E"/></svg>
<div style="left:902px;top:163px;width:346px;height:1px;background:#D6DBE9;"></div>
<div style="left:904px;top:166px;width:342px;height:19px;background:transparent;box-sizing:border-box;border:1px dotted #333;"></div>
<svg style="left:906px;top:171px;" width="8" height="8" viewBox="0 0 8 8"><path d="M7 0V7H0Z" fill="#1E1E1E"/></svg>
<div class="t" style="left:919.4px;top:168.00px;font-size:13px;line-height:13px;color:#1E1E1E;transform-origin:0 0;transform:scaleX(0.9051);">Project</div>
<div style="left:919px;top:186px;width:3px;height:32px;background:#E8462B;"></div>
<div style="left:922px;top:186px;width:32px;height:32px;background:#EEEFF3;"></div>
<div style="left:954px;top:186px;width:123px;height:32px;background:#F7F7F9;"></div>
<svg style="left:925px;top:190px;" width="24" height="24" viewBox="0 0 24 24"><circle cx="12" cy="12" r="9" stroke="#333" stroke-width="2" fill="none"/><path d="M11 6V13H16" stroke="#333" stroke-width="2" fill="none"/></svg>
<div class="t" style="left:960.0px;top:195.84px;font-size:12px;line-height:12px;color:#1E1E1E;transform-origin:0 0;transform:scaleX(0.9363);">Changes</div>
<div style="left:1083px;top:186px;width:3px;height:32px;background:#E8462B;"></div>
<div style="left:1086px;top:186px;width:32px;height:32px;background:#EEEFF3;"></div>
<div style="left:1118px;top:186px;width:123px;height:32px;background:#F7F7F9;"></div>
<svg style="left:1089px;top:190px;" width="24" height="24" viewBox="0 0 24 24"><path d="M12 21V13L5 6M12 13L19 6M3.5 9V4.5H8M20.5 9V4.5H16" stroke="#333" stroke-width="2.6" fill="none"/></svg>
<div class="t" style="left:1124.0px;top:195.84px;font-size:12px;line-height:12px;color:#1E1E1E;transform-origin:0 0;transform:scaleX(0.9411);">Branches</div>
<div style="left:919px;top:224px;width:3px;height:32px;background:#E8462B;"></div>
<div style="left:922px;top:224px;width:32px;height:32px;background:#EEEFF3;"></div>
<div style="left:954px;top:224px;width:123px;height:32px;background:#F7F7F9;"></div>
<svg style="left:925px;top:228px;" width="24" height="24" viewBox="0 0 24 24"><path d="M8 21V4M4 8L8 4L12 8M16 3V20M12 16L16 20L20 16" stroke="#333" stroke-width="2" fill="none"/></svg>
<div class="t" style="left:960.0px;top:233.84px;font-size:12px;line-height:12px;color:#1E1E1E;transform-origin:0 0;transform:scaleX(0.9904);">Unsynced Commits</div>
<div style="left:1083px;top:224px;width:3px;height:32px;background:#0E70C0;"></div>
<div style="left:1086px;top:224px;width:32px;height:32px;background:#EEEFF3;"></div>
<div style="left:1118px;top:224px;width:123px;height:32px;background:#F7F7F9;"></div>
<svg style="left:1089px;top:228px;" width="24" height="24" viewBox="0 0 24 24"><g transform="translate(12 12)" fill="#333"><circle r="7"/><rect x="-2" y="-10" width="4" height="5" transform="rotate(0)"/><rect x="-2" y="-10" width="4" height="5" transform="rotate(45)"/><rect x="-2" y="-10" width="4" height="5" transform="rotate(90)"/><rect x="-2" y="-10" width="4" height="5" transform="rotate(135)"/><rect x="-2" y="-10" width="4" height="5" transform="rotate(180)"/><rect x="-2" y="-10" width="4" height="5" transform="rotate(225)"/><rect x="-2" y="-10" width="4" height="5" transform="rotate(270)"/><rect x="-2" y="-10" width="4" height="5" transform="rotate(315)"/><circle r="3" fill="#EEEFF3"/></g></svg>
<div class="t" style="left:1124.0px;top:233.84px;font-size:12px;line-height:12px;color:#1E1E1E;transform-origin:0 0;transform:scaleX(0.9821);">Settings</div>
<div style="left:902px;top:275px;width:346px;height:1px;background:#D6DBE9;"></div>
<svg style="left:906px;top:282px;" width="8" height="8" viewBox="0 0 8 8"><path d="M7 0V7H0Z" fill="#1E1E1E"/></svg>
<div class="t" style="left:919.4px;top:279.00px;font-size:13px;line-height:13px;color:#1E1E1E;transform-origin:0 0;transform:scaleX(0.9234);">Solutions</div>
<div class="t" style="left:919.4px;top:295.84px;font-size:12px;line-height:12px;color:#717171;transform-origin:0 0;transform:scaleX(0.9498);">Branch:</div>
<div class="t" style="left:962.7px;top:295.84px;font-size:12px;line-height:12px;color:#0E70C0;transform-origin:0 0;transform:scaleX(0.9704);">master</div>
<svg style="left:1003px;top:300px;" width="9" height="5" viewBox="0 0 9 5"><path d="M0 0H8L4 4Z" fill="#0E70C0"/></svg>
<div style="left:1015px;top:294px;width:1px;height:15px;background:#666666;"></div>
<div class="t" style="left:1020.3px;top:295.84px;font-size:12px;line-height:12px;color:#0E70C0;transform-origin:0 0;transform:scaleX(0.9738);">New...</div>
<div style="left:1057px;top:294px;width:1px;height:15px;background:#666666;"></div>
<div class="t" style="left:1062.6px;top:295.84px;font-size:12px;line-height:12px;color:#0E70C0;transform-origin:0 0;transform:scaleX(0.9473);">Open...</div>
<svg style="left:920px;top:318px;" width="16" height="16" viewBox="0 0 16 16"><path d="M5 13.5H14.5V2.5H1.5V8" stroke="#555" stroke-width="1.1" fill="none"/><rect x="1" y="1.5" width="14" height="2" fill="#555"/><path d="M1.5 10L4 12L6.5 9.5V15L4 12.5L1.5 14.5Z" stroke="#444" stroke-width="1.1" fill="none"/></svg>
<div class="t" style="left:941.7px;top:318.84px;font-size:12px;line-height:12px;color:#1E1E1E;font-weight:700;transform-origin:0 0;transform:scaleX(0.9581);">Symptom Diary.sln</div>
<div style="left:1051px;top:317px;width:1px;height:15px;background:#A0A0A0;"></div>
<div class="t" style="left:1058.2px;top:318.84px;font-size:12px;line-height:12px;color:#717171;transform-origin:0 0;transform:scaleX(1.0157);">Wp\Symptom Diary</div>
<div style="left:901px;top:686px;width:100px;height:20px;background:#4D6082;"></div>
<div style="left:1001px;top:685px;width:85px;height:20px;background:#FFFFFF;"></div>
<div style="left:1086px;top:686px;width:88px;height:20px;background:#4D6082;"></div>
<div class="t" style="left:906.2px;top:689.84px;font-size:12px;line-height:12px;color:#FFFFFF;transform-origin:0 0;transform:scaleX(0.9696);">Solution Explorer</div>
<div class="t" style="left:1006.9px;top:688.84px;font-size:12px;line-height:12px;color:#1E1E1E;transform-origin:0 0;transform:scaleX(0.9525);">Team Explorer</div>
<div class="t" style="left:1092.4px;top:689.84px;font-size:12px;line-height:12px;color:#FFFFFF;transform-origin:0 0;transform:scaleX(0.9139);">Server Explorer</div>
<div style="left:31px;top:514px;width:864px;height:172px;background:#4D6082;"></div>
<div class="t" style="left:36.75px;top:519.84px;font-size:12px;line-height:12px;color:#FFFFFF;transform-origin:0 0;transform:scaleX(0.9243);">Error List</div>
<svg style="left:849px;top:522px;" width="8" height="5" viewBox="0 0 8 5"><path d="M0 0H7L3.5 4Z" fill="#FFFFFF"/></svg>
<svg style="left:861px;top:518px;" width="11" height="12" viewBox="0 0 11 12"><path d="M3 1H8M3.5 1V6M7.5 1V6M2 6.5H9M5.5 7V11.5" stroke="#FFFFFF" stroke-width="1.3" fill="none"/></svg>
<svg style="left:877px;top:519px;" width="11" height="11" viewBox="0 0 11 11"><path d="M1 1L10 10M10 1L1 10" stroke="#FFFFFF" stroke-width="1.5"/></svg>
<div style="left:32px;top:536px;width:862px;height:28px;background:#CFD6E5;"></div>
<svg style="left:42px;top:543px;" width="12" height="12" viewBox="0 0 12 12"><path d="M0.5 1H11.5L7.2 6V11L4.8 9.5V6Z" fill="#1E1E1E"/></svg>
<svg style="left:62px;top:548px;" width="7" height="4" viewBox="0 0 7 4"><path d="M0 0H6L3 3Z" fill="#1E1E1E"/></svg>
<div style="left:74px;top:541px;width:1px;height:19px;background:#9AA3B5;"></div>
<div style="left:79px;top:538px;width:65px;height:24px;background:#FCF3C5;box-sizing:border-box;border:1px solid #E5C365;"></div>
<svg style="left:83px;top:543px;" width="15" height="15" viewBox="0 0 15 15"><circle cx="7.5" cy="7.5" r="7.2" fill="#E51400"/><path d="M4.6 4.6L10.4 10.4M10.4 4.6L4.6 10.4" stroke="#FFFFFF" stroke-width="2.6"/></svg>
<div class="t" style="left:102.5px;top:544.84px;font-size:12px;line-height:12px;color:#1E1E1E;transform-origin:0 0;transform:scaleX(0.9131);">1 Error</div>
<div style="left:147px;top:541px;width:1px;height:19px;background:#9AA3B5;"></div>
<svg style="left:155px;top:543px;" width="16" height="15" viewBox="0 0 16 15"><path d="M8 1L15 14H1Z" fill="#B8BDC8" stroke="#C4C9D3" stroke-width="1"/><path d="M8 5V10M8 11.5V13" stroke="#E8EBF2" stroke-width="1.6"/></svg>
<div class="t" style="left:175.0px;top:544.84px;font-size:12px;line-height:12px;color:#8D93A0;transform-origin:0 0;transform:scaleX(0.9710);">0 Warnings</div>
<div style="left:245px;top:541px;width:1px;height:19px;background:#9AA3B5;"></div>
<svg style="left:254px;top:543px;" width="15" height="15" viewBox="0 0 15 15"><circle cx="7.5" cy="7.5" r="7" fill="#B8BDC8"/><path d="M7.5 6.5V12M7.5 3.5V5" stroke="#E8EBF2" stroke-width="2"/></svg>
<div class="t" style="left:273.0px;top:544.84px;font-size:12px;line-height:12px;color:#8D93A0;transform-origin:0 0;transform:scaleX(0.9198);">0 Messages</div>
<div style="left:694px;top:539px;width:199px;height:20px;background:#FFFFFF;box-sizing:border-box;border:1px solid #CCCEDB;"></div>
<div class="t" style="left:699.0px;top:542.84px;font-size:12px;line-height:12px;color:#717171;transform-origin:0 0;transform:scaleX(0.9311);">Search Error List</div>
<svg style="left:865px;top:541px;" width="14" height="15" viewBox="0 0 14 15"><circle cx="8.5" cy="5.5" r="4" stroke="#717171" stroke-width="1.8" fill="none"/><path d="M5.5 8.5L1.5 12.5" stroke="#717171" stroke-width="2.4"/></svg>
<svg style="left:884px;top:547px;" width="7" height="4" viewBox="0 0 7 4"><path d="M0 0H6L3 3Z" fill="#717171"/></svg>
<div style="left:32px;top:564px;width:862px;height:24px;background:#F5F5F5;"></div>
<div style="left:32px;top:587px;width:862px;height:1px;background:#CCCEDB;"></div>
<div style="left:48px;top:564px;width:1px;height:23px;background:#D4D6DE;"></div>
<div style="left:66px;top:564px;width:1px;height:23px;background:#D4D6DE;"></div>
<div style="left:513px;top:564px;width:1px;height:23px;background:#D4D6DE;"></div>
<div style="left:633px;top:564px;width:1px;height:23px;background:#D4D6DE;"></div>
<div style="left:703px;top:564px;width:1px;height:23px;background:#D4D6DE;"></div>
<div style="left:773px;top:564px;width:1px;height:23px;background:#D4D6DE;"></div>
<div class="t" style="left:72.5px;top:569.84px;font-size:12px;line-height:12px;color:#1E1E1E;transform-origin:0 0;transform:scaleX(0.9792);">Description</div>
<div class="t" style="left:519.4px;top:569.84px;font-size:12px;line-height:12px;color:#1E1E1E;transform-origin:0 0;transform:scaleX(0.9061);">File</div>
<div class="t" style="left:639.0px;top:569.84px;font-size:12px;line-height:12px;color:#1E1E1E;transform-origin:0 0;transform:scaleX(0.9697);">Line</div>
<div class="t" style="left:709.4px;top:569.84px;font-size:12px;line-height:12px;color:#1E1E1E;transform-origin:0 0;transform:scaleX(1.0199);">Column</div>
<div class="t" style="left:779.0px;top:569.84px;font-size:12px;line-height:12px;color:#1E1E1E;transform-origin:0 0;transform:scaleX(0.9793);">Project</div>
<div style="left:32px;top:588px;width:862px;height:98px;background:#FFFFFF;"></div>
<svg style="left:33px;top:590px;" width="15" height="15" viewBox="0 0 15 15"><circle cx="7.5" cy="7.5" r="7.2" fill="#E51400"/><path d="M4.6 4.6L10.4 10.4M10.4 4.6L4.6 10.4" stroke="#FFFFFF" stroke-width="2.6"/></svg>
<div class="t" style="left:52px;top:591.84px;font-size:12px;line-height:12px;color:#1E1E1E;">1</div>
<div class="t" style="left:69.25px;top:591.84px;font-size:12px;line-height:12px;color:#1E1E1E;transform-origin:0 0;transform:scaleX(1.0003);">A method was called on an uninitialized object.</div>
<div class="t" style="left:636px;top:591.84px;font-size:12px;line-height:12px;color:#1E1E1E;">0</div>
<div class="t" style="left:706px;top:591.84px;font-size:12px;line-height:12px;color:#1E1E1E;">0</div>
<div style="left:31px;top:685px;width:57px;height:20px;background:#FFFFFF;"></div>
<div style="left:88px;top:686px;width:83px;height:20px;background:#4D6082;"></div>
<div class="t" style="left:37.5px;top:688.84px;font-size:12px;line-height:12px;color:#1E1E1E;transform-origin:0 0;transform:scaleX(0.9243);">Error List</div>
<div class="t" style="left:94.2px;top:689.84px;font-size:12px;line-height:12px;color:#FFFFFF;transform-origin:0 0;transform:scaleX(0.9271);">Find Results 1</div>
<div class="t" style="left:31.7px;top:713.84px;font-size:12px;line-height:12px;color:#FFFFFF;transform-origin:0 0;transform:scaleX(1.0278);">Output</div>
<div style="left:31px;top:731px;width:38px;height:6px;background:#4D6082;"></div>
<div class="t" style="left:4.4px;top:742.84px;font-size:12px;line-height:12px;color:#FFFFFF;transform-origin:0 0;transform:scaleX(0.9081);">Ready</div>
<div style="left:895px;top:104px;width:6px;height:582px;background:#32466A;"></div>
<div style="left:31px;top:508px;width:864px;height:6px;background:#32466A;"></div>
<div style="left:31px;top:106px;width:1px;height:402px;background:#8E9BC4;"></div>
<div style="left:893px;top:106px;width:1px;height:401px;background:#293955;"></div>
<div style="left:894px;top:104px;width:1px;height:404px;background:#8E9BC4;"></div>
<div style="left:31px;top:507px;width:864px;height:1px;background:#8E9BC4;"></div>
<div style="left:31px;top:514px;width:864px;height:1px;background:#8E9BC4;"></div>
<div style="left:31px;top:514px;width:1px;height:192px;background:#8E9BC4;"></div>
<div style="left:31px;top:705px;width:57px;height:1px;background:#8E9BC4;"></div>
<div style="left:894px;top:514px;width:1px;height:172px;background:#8E9BC4;"></div>
<div style="left:88px;top:685px;width:807px;height:1px;background:#8E9BC4;"></div>
<div style="left:901px;top:85px;width:348px;height:1px;background:#8E9BC4;"></div>
<div style="left:901px;top:85px;width:1px;height:601px;background:#8E9BC4;"></div>
<div style="left:1248px;top:85px;width:1px;height:601px;background:#8E9BC4;"></div>
<div style="left:901px;top:685px;width:100px;height:1px;background:#8E9BC4;"></div>
<div style="left:1086px;top:685px;width:163px;height:1px;background:#8E9BC4;"></div>
<div style="left:1001px;top:705px;width:85px;height:1px;background:#8E9BC4;"></div>
</body></html>
